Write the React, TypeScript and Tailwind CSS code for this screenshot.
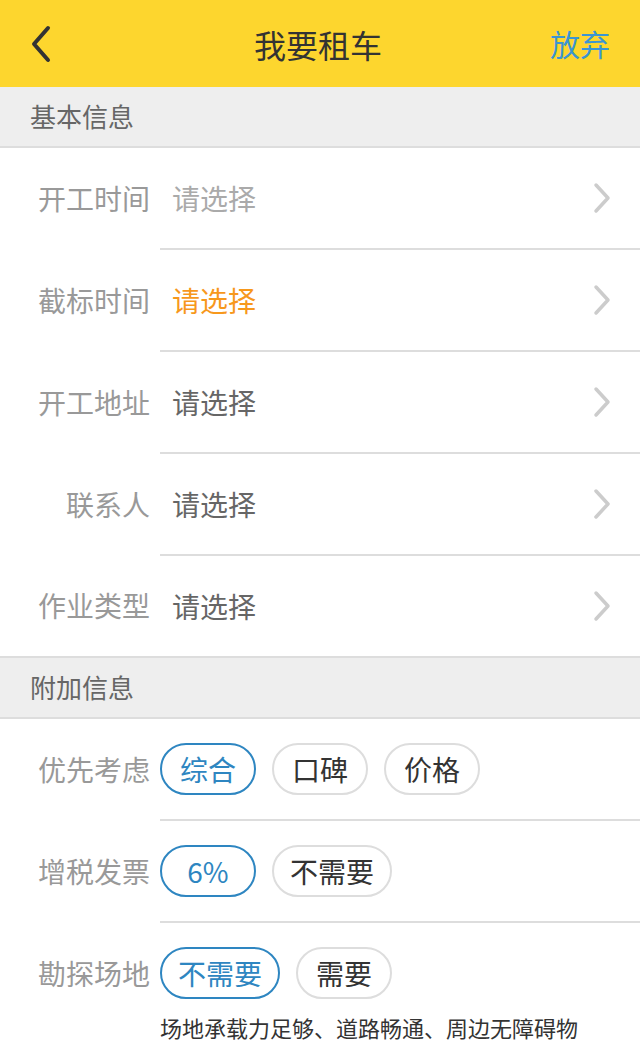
import React from 'react';

const font = { fontFamily: '"Noto Sans CJK SC", "Noto Sans", sans-serif' };

function Chevron() {
  return (
    <svg width="20" height="32" viewBox="0 0 20 32" className="mr-[28px]">
      <path d="M4 3 L16 16 L4 29" fill="none" stroke="#cccccc" strokeWidth="3.5" strokeLinecap="round" strokeLinejoin="round" />
    </svg>
  );
}

function SectionHeader({ title }: { title: string }) {
  return (
    <div className="h-[61px] bg-[#eeeeee] border-b-2 border-[#dddddd] flex items-center pl-[30px] pb-[2px] text-[26px] text-[#666666]">
      {title}
    </div>
  );
}

function SelectRow({ label, value, tone, last }: { label: string; value: string; tone: 'light' | 'orange' | 'dark'; last?: boolean }) {
  const valueColor = tone === 'orange' ? 'text-[#f7981c]' : tone === 'light' ? 'text-[#aaaaaa]' : 'text-[#666666]';
  return (
    <div className="flex">
      <div className="w-[160px] shrink-0 flex items-center justify-end pr-[10px] pb-[2px] text-[28px] text-[#999999]">{label}</div>
      <div className={`flex-1 ${last ? 'h-[100px]' : 'h-[102px] border-b-2 border-[#dddddd]'} flex items-center justify-between`}>
        <span className={`pl-[12px] text-[28px] ${valueColor}`}>{value}</span>
        <Chevron />
      </div>
    </div>
  );
}

function Chip({ text, active, w }: { text: string; active?: boolean; w: string }) {
  return (
    <div
      className={`${w} h-[52px] rounded-[26px] border-2 flex items-center justify-center text-[28px] ${
        active ? 'border-[#2e86c1] text-[#2e86c1]' : 'border-[#dddddd] text-[#333333]'
      }`}
    >
      {text}
    </div>
  );
}

function ChipRow({ label, chips, children, last }: { label: string; chips: { text: string; active?: boolean; w: string }[]; children?: React.ReactNode; last?: boolean }) {
  return (
    <div className="flex">
      <div className="w-[160px] shrink-0 h-[100px] flex items-center justify-end pr-[10px] text-[28px] text-[#999999]">{label}</div>
      <div className={`flex-1 ${last ? '' : 'border-b-2 border-[#dddddd]'}`}>
        <div className="h-[100px] flex items-center gap-[16px]">
          {chips.map((c) => (
            <Chip key={c.text} {...c} />
          ))}
        </div>
        {children}
      </div>
    </div>
  );
}

export default function App() {
  return (
    <div className="w-[640px] h-[1056px] bg-white overflow-hidden" style={font}>
      <div className="h-[87px] bg-[#fdd62e] flex items-center justify-between px-[28px]">
        <svg width="26" height="40" viewBox="0 0 26 40">
          <path d="M20 4 L6 20 L20 36" fill="none" stroke="#333333" strokeWidth="4" strokeLinecap="round" strokeLinejoin="round" />
        </svg>
        <span className="text-[32px] text-[#333333] ml-[32px]">我要租车</span>
        <span className="text-[30px] text-[#3b95d3] mr-[2px]">放弃</span>
      </div>

      <SectionHeader title="基本信息" />
      <SelectRow label="开工时间" value="请选择" tone="light" />
      <SelectRow label="截标时间" value="请选择" tone="orange" />
      <SelectRow label="开工地址" value="请选择" tone="dark" />
      <SelectRow label="联系人" value="请选择" tone="dark" />
      <SelectRow label="作业类型" value="请选择" tone="dark" last />

      <div className="border-t-2 border-[#dddddd]">
        <SectionHeader title="附加信息" />
      </div>
      <ChipRow
        label="优先考虑"
        chips={[
          { text: '综合', active: true, w: 'w-[96px]' },
          { text: '口碑', w: 'w-[96px]' },
          { text: '价格', w: 'w-[96px]' },
        ]}
      />
      <ChipRow
        label="增税发票"
        chips={[
          { text: '6%', active: true, w: 'w-[96px]' },
          { text: '不需要', w: 'w-[120px]' },
        ]}
      />
      <ChipRow
        label="勘探场地"
        chips={[
          { text: '不需要', active: true, w: 'w-[120px]' },
          { text: '需要', w: 'w-[96px]' },
        ]}
        last
      >
        <div className="text-[22px] text-[#333333] -mt-[12px]">场地承载力足够、道路畅通、周边无障碍物</div>
      </ChipRow>
    </div>
  );
}
